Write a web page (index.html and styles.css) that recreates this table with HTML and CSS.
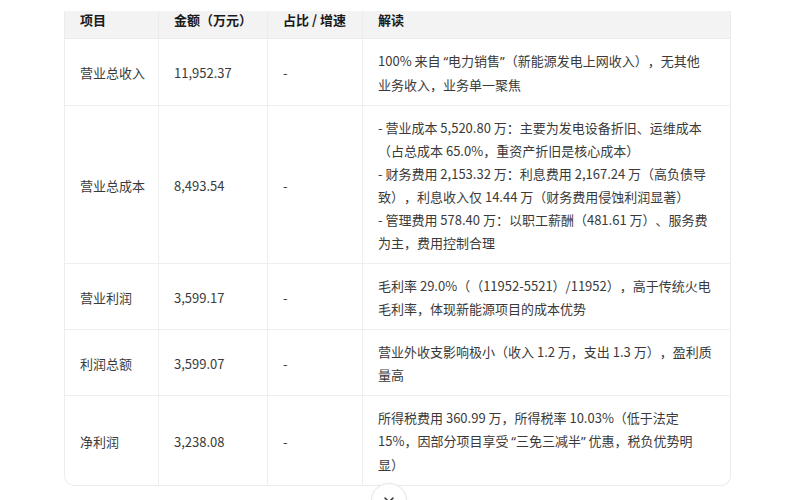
FILE: index.html
```html
<!DOCTYPE html>
<html lang="zh-CN">
<head>
<meta charset="utf-8">
<link rel="stylesheet" href="styles.css">
</head>
<body>
<div class="page">
  <div class="table-wrap">
    <table class="fin">
      <colgroup>
        <col class="c1"><col class="c2"><col class="c3"><col class="c4">
      </colgroup>
      <thead>
        <tr><th>项目</th><th>金额（万元）</th><th>占比 / 增速</th><th>解读</th></tr>
      </thead>
      <tbody>
        <tr>
          <td>营业总收入</td><td>11,952.37</td><td>-</td>
          <td class="note">100% 来自 <span class="q">“电力销售”</span>（新能源发电上网收入），无其他<br>业务收入，业务单一聚焦</td>
        </tr>
        <tr>
          <td>营业总成本</td><td>8,493.54</td><td>-</td>
          <td class="note">- 营业成本 5,520.80 万：主要为发电设备折旧、运维成本（占总成本 65.0%，重资产折旧是核心成本）<br>- 财务费用 2,153.32 万：利息费用 2,167.24 万（高负债导致），利息收入仅 14.44 万（财务费用侵蚀利润显著）<br>- 管理费用 578.40 万：以职工薪酬（481.61 万）、服务费为主，费用控制合理</td>
        </tr>
        <tr>
          <td>营业利润</td><td>3,599.17</td><td>-</td>
          <td class="note">毛利率 29.0%（（11952-5521）/11952），高于传统火电毛利率，体现新能源项目的成本优势</td>
        </tr>
        <tr>
          <td>利润总额</td><td>3,599.07</td><td>-</td>
          <td class="note">营业外收支影响极小（收入 1.2 万，支出 1.3 万），盈利质量高</td>
        </tr>
        <tr>
          <td>净利润</td><td>3,238.08</td><td>-</td>
          <td class="note">所得税费用 360.99 万，所得税率 10.03%（低于法定 15%，因部分项目享受 <span class="q">“三免三减半”</span> 优惠，税负优势明显）</td>
        </tr>
      </tbody>
    </table>
  </div>
  <button class="scroll-btn" aria-label="scroll down">
    <svg width="14" height="14" viewBox="0 0 14 14"><path d="M3 5l4 4 4-4" fill="none" stroke="#333" stroke-width="1.5" stroke-linecap="round" stroke-linejoin="round"/></svg>
  </button>
</div>
</body>
</html>
```
FILE: styles.css
```css
html, body {
  margin: 0;
  padding: 0;
  background: #fff;
  overflow: hidden;
}
body {
  font-family: "Noto Sans CJK SC", "Noto Sans", sans-serif;
  font-size: 13px;
  color: #3a3a3a;
  text-spacing-trim: space-all;
}
.q {
  font-family: "Noto Sans", "Noto Sans CJK SC", sans-serif;
}
.page {
  position: relative;
  height: 500px;
  padding: 11px 0 0 64px;
  box-sizing: border-box;
}
.table-wrap {
  width: 667px;
  border: 1px solid #ececec;
  border-top: none;
  border-radius: 0 0 10px 10px;
  overflow: hidden;
  box-sizing: border-box;
}
.fin {
  width: 100%;
  border-collapse: separate;
  border-spacing: 0;
  table-layout: fixed;
}
.c1 { width: 94px; }
.c2 { width: 109px; }
.c3 { width: 95px; }
.c4 { width: auto; }
.fin th {
  background: #f3f3f3;
  color: #1a1a1a;
  font-weight: 700;
  text-align: left;
  line-height: 18px;
  padding: 0 15px 9px;
  white-space: nowrap;
  border-right: 1px solid #ebebeb;
  border-bottom: 1px solid #ebebeb;
}
.fin td {
  line-height: 23px;
  padding: 10px 15px 9px;
  vertical-align: middle;
  border-right: 1px solid #efefef;
  border-bottom: 1px solid #efefef;
}
.fin td:not(.note) { white-space: nowrap; padding-right: 8px; }
.fin th:last-child, .fin td:last-child { border-right: none; }
.fin tbody tr:last-child td { border-bottom: none; }
.fin td.note { padding-right: 16px; }
.scroll-btn {
  position: absolute;
  left: 371px;
  top: 483px;
  width: 36px;
  height: 36px;
  border-radius: 50%;
  border: 1px solid #e6e6e6;
  background: #fff;
  box-shadow: 0 1px 4px rgba(0,0,0,0.06);
  display: flex;
  align-items: flex-start;
  justify-content: center;
  padding: 9px 0 0;
  box-sizing: border-box;
}
```
